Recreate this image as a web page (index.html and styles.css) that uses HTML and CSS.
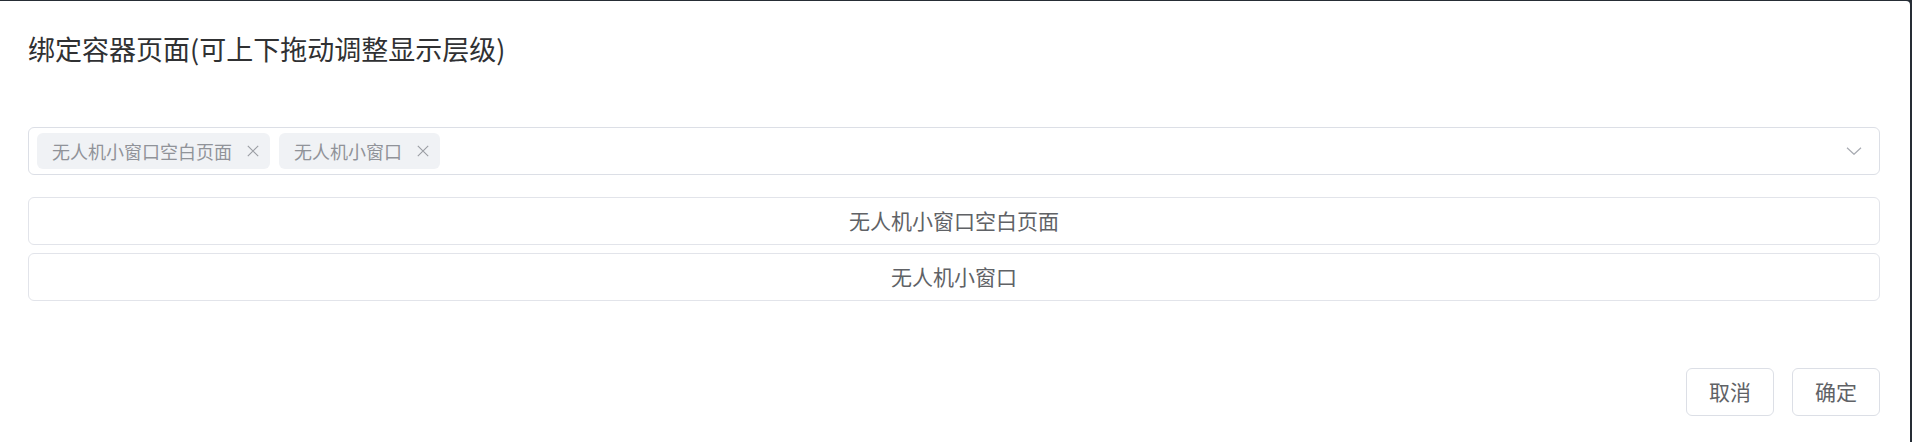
FILE: index.html
```html
<!DOCTYPE html>
<html lang="zh-CN">
<head>
<meta charset="utf-8">
<title>绑定容器页面</title>
<link rel="stylesheet" href="styles.css">
</head>
<body>
<div class="dialog">
  <header class="dialog-header">
    <span class="dialog-title">绑定容器页面(可上下拖动调整显示层级)</span>
  </header>
  <div class="dialog-body">
    <div class="select">
      <div class="select-tags">
        <span class="tag"><span class="tag-text">无人机小窗口空白页面</span><span class="tag-close"><svg viewBox="0 0 12 12" width="12" height="12"><path d="M0.8 0.8L11.2 11.2M11.2 0.8L0.8 11.2" stroke="#9a9da3" stroke-width="1.1" fill="none"/></svg></span></span>
        <span class="tag"><span class="tag-text">无人机小窗口</span><span class="tag-close"><svg viewBox="0 0 12 12" width="12" height="12"><path d="M0.8 0.8L11.2 11.2M11.2 0.8L0.8 11.2" stroke="#9a9da3" stroke-width="1.1" fill="none"/></svg></span></span>
      </div>
      <span class="select-arrow"><svg viewBox="0 0 16 8" width="16" height="8"><path d="M1 0.7L8 7.3L15 0.7" stroke="#a8abb2" stroke-width="1.2" fill="none"/></svg></span>
    </div>
    <ul class="page-list">
      <li class="page-item">无人机小窗口空白页面</li>
      <li class="page-item">无人机小窗口</li>
    </ul>
  </div>
  <footer class="dialog-footer">
    <button class="btn">取消</button>
    <button class="btn">确定</button>
  </footer>
</div>
</body>
</html>
```

FILE: styles.css
```css
html, body {
  margin: 0;
  padding: 0;
  height: 100%;
}
body {
  background: #262d35;
  font-family: "Noto Sans CJK SC", "Noto Sans", sans-serif;
  overflow: hidden;
}
.dialog {
  margin-top: 1px;
  width: 1910px;
  height: 441px;
  box-sizing: border-box;
  background: #ffffff;
  border-top-right-radius: 4px;
  padding: 30px 30px 0 28px;
}
.dialog-header {
  height: 36px;
  line-height: 36px;
}
.dialog-title {
  font-size: 27px;
  color: #303133;
}
.dialog-body {
  margin-top: 60px;
}
.select {
  height: 48px;
  box-sizing: border-box;
  border: 1px solid #dcdfe6;
  border-radius: 6px;
  display: flex;
  align-items: center;
  padding: 0 17px 0 8px;
}
.select-tags {
  flex: 1;
  display: flex;
  align-items: center;
  gap: 9px;
}
.tag {
  height: 36px;
  box-sizing: border-box;
  background: #f0f2f5;
  border-radius: 6px;
  display: inline-flex;
  align-items: center;
  padding: 0 7px 0 15px;
  color: #909399;
  font-size: 18px;
}
.tag-text {
  line-height: 36px;
}
.tag-close {
  width: 21px;
  height: 21px;
  margin-left: 10px;
  display: inline-flex;
  align-items: center;
  justify-content: center;
}
.select-arrow {
  display: flex;
  align-items: center;
}
.page-list {
  list-style: none;
  margin: 22px 0 0 0;
  padding: 0;
  display: flex;
  flex-direction: column;
  gap: 8px;
}
.page-item {
  height: 48px;
  box-sizing: border-box;
  border: 1px solid #e2e4ea;
  border-radius: 6px;
  display: flex;
  align-items: center;
  justify-content: center;
  padding-bottom: 2px;
  font-size: 21px;
  color: #606266;
}
.dialog-footer {
  margin-top: 67px;
  display: flex;
  justify-content: flex-end;
  gap: 18px;
}
.btn {
  width: 88px;
  height: 48px;
  box-sizing: border-box;
  border: 1px solid #dcdfe6;
  border-radius: 6px;
  background: #ffffff;
  color: #606266;
  font-family: "Noto Sans CJK SC", "Noto Sans", sans-serif;
  font-size: 21px;
  padding: 0 0 2px 0;
  cursor: pointer;
}
```
